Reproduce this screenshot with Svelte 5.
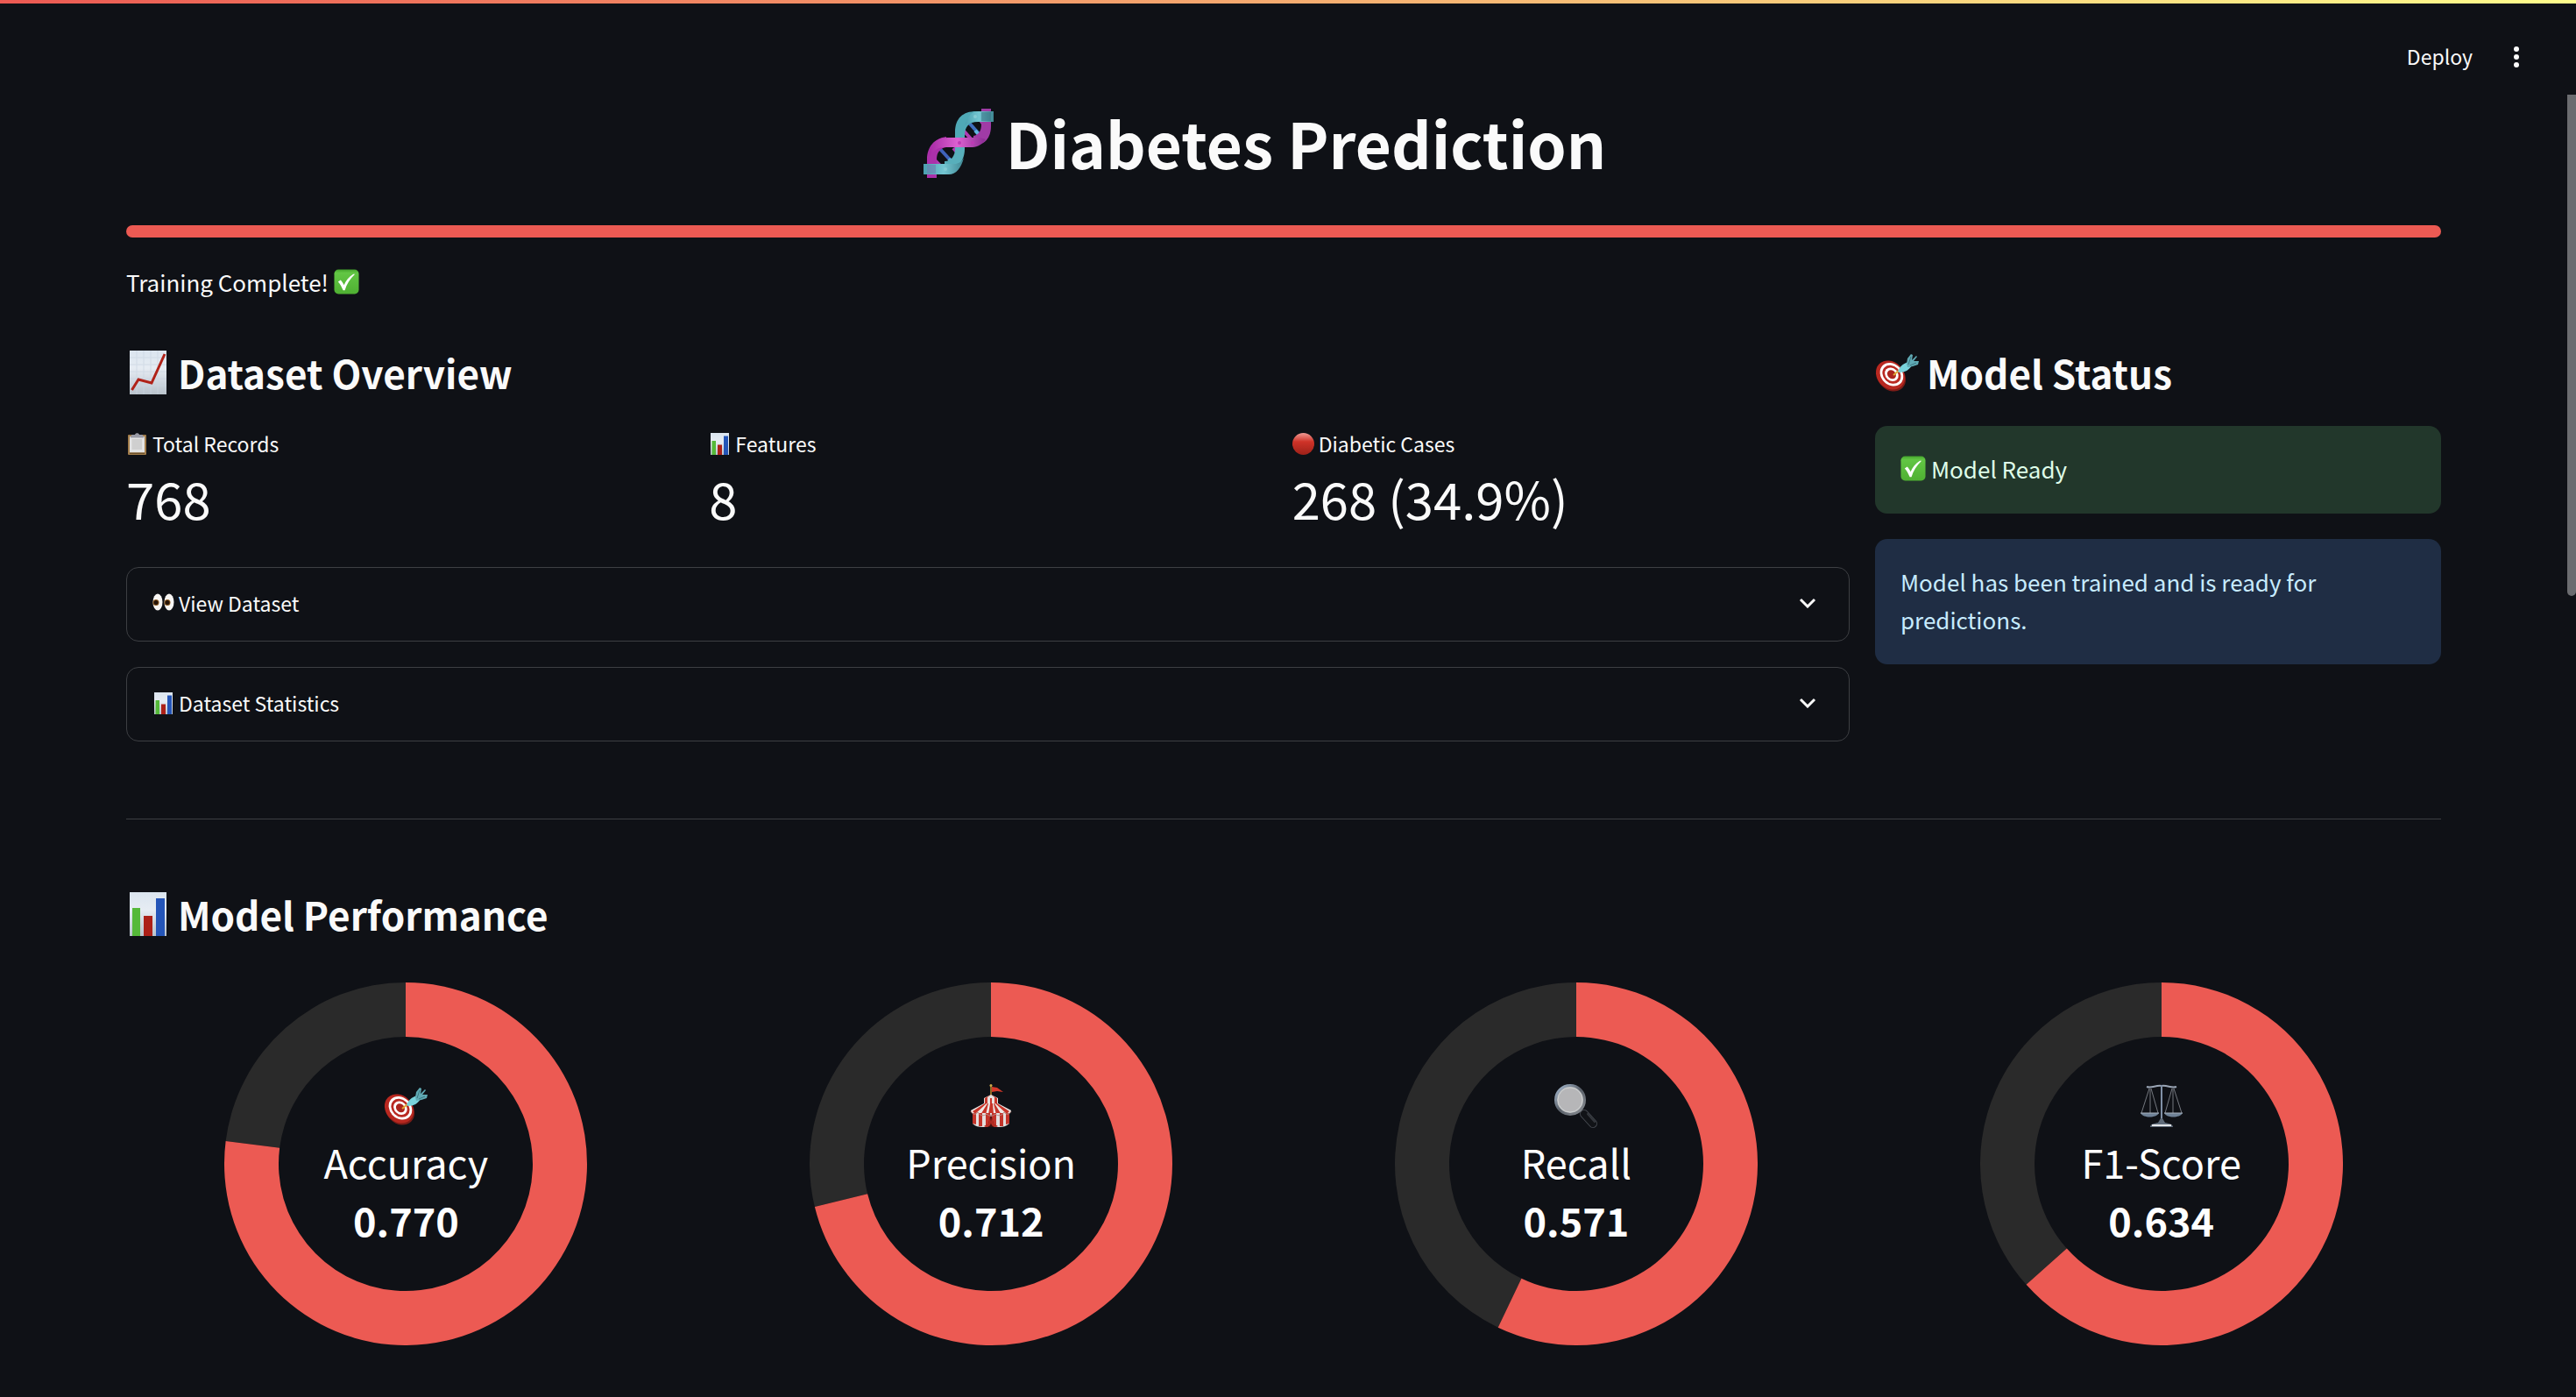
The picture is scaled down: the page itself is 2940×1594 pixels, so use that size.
<script>
  const metrics = [
    { icon: 'clipboard', label: 'Total Records', value: '768' },
    { icon: 'bars', label: 'Features', value: '8' },
    { icon: 'redDot', label: 'Diabetic Cases', value: '268 (34.9%)' }
  ];

  const panels = [
    { icon: 'eyes', label: 'View Dataset' },
    { icon: 'bars', label: 'Dataset Statistics' }
  ];

  const scores = [
    { icon: 'target', label: 'Accuracy', value: 0.77 },
    { icon: 'tent', label: 'Precision', value: 0.712 },
    { icon: 'magnifier', label: 'Recall', value: 0.571 },
    { icon: 'scales', label: 'F1-Score', value: 0.634 }
  ];

  // Annular sector between two fractions of a full turn, clockwise from 12 o'clock
  function sector(from, to) {
    const outer = 207;
    const inner = 145;
    const point = (radius, turn) => {
      const angle = turn * 2 * Math.PI;
      return `${(207 + radius * Math.sin(angle)).toFixed(2)} ${(207 - radius * Math.cos(angle)).toFixed(2)}`;
    };
    const large = to - from > 0.5 ? 1 : 0;
    return `M${point(outer, from)}A${outer} ${outer} 0 ${large} 1 ${point(outer, to)}L${point(inner, to)}A${inner} ${inner} 0 ${large} 0 ${point(inner, from)}Z`;
  }
</script>

<svg class="defs" aria-hidden="true">
  <defs>
    <linearGradient id="green" x1="0" y1="0" x2="0" y2="1">
      <stop offset="0" stop-color="#45a62c" /><stop offset="0.14" stop-color="#62c644" /><stop offset="1" stop-color="#4fb032" />
    </linearGradient>
    <linearGradient id="red" x1="0" y1="0" x2="0" y2="1">
      <stop offset="0" stop-color="#f09a94" /><stop offset="0.4" stop-color="#cf3328" /><stop offset="1" stop-color="#9d2119" />
    </linearGradient>
    <linearGradient id="paper" x1="0" y1="0" x2="0" y2="1">
      <stop offset="0" stop-color="#dbe5ef" /><stop offset="0.4" stop-color="#e6ecf3" /><stop offset="1" stop-color="#b9c3cc" />
    </linearGradient>
    <linearGradient id="pink" x1="0" y1="0" x2="1" y2="0">
      <stop offset="0" stop-color="#a82aa6" /><stop offset="0.5" stop-color="#dd62d2" /><stop offset="1" stop-color="#8a2b93" />
    </linearGradient>
    <linearGradient id="teal" x1="0" y1="0" x2="1" y2="0">
      <stop offset="0" stop-color="#4a9fae" /><stop offset="0.5" stop-color="#74c6d2" /><stop offset="1" stop-color="#3f8793" />
    </linearGradient>
    <linearGradient id="steel" x1="0" y1="0" x2="1" y2="1">
      <stop offset="0" stop-color="#a9bdd4" /><stop offset="0.5" stop-color="#596069" /><stop offset="1" stop-color="#8c9095" />
    </linearGradient>
  </defs>
</svg>

{#snippet icon(name)}
  {#if name === 'dna'}
    <svg class="icon" viewBox="0 0 80 80" aria-hidden="true">
      <path d="M51 17 67 35" stroke="#3f6fc0" stroke-width="4" />
      <path d="m59 27 8 9" stroke="#62b7e0" stroke-width="4" />
      <path d="m65 15 8 11M43 24l17 19" stroke="#b03bb4" stroke-width="4" />
      <path d="m18 47 21 23" stroke="#3f62bb" stroke-width="4" />
      <path d="m29 59 9 10" stroke="#57a9dc" stroke-width="4" />
      <path d="m10 58 12 12M34 47l9 10" stroke="#b03bb4" stroke-width="4" />
      <path d="M66 2h11v20c0 13-7 22-20 22V33c6-1 9-6 9-13z" fill="#a03ba6" />
      <path d="M36 44V29C36 13 45 5 60 5h5v12C53 16 47 21 47 33v11z" fill="#4fa9b6" />
      <path d="M47 21C51 9 56 5 62 5h18v12H60c-6 0-10 1-13 4z" fill="url(#teal)" />
      <path d="M36 43h11v5c0 13-8 24-20 24H24V62c8 0 12-7 12-14z" fill="#58afbb" />
      <path d="M4 81V60c0-15 9-24 22-26v12c-7 1-11 6-11 14v21z" fill="#ab30aa" />
      <path d="M7 47C12 38 18 35 28 35h37l6 2c-4 5-9 9-15 9H25c-8 0-14 3-18 11z" fill="url(#pink)" />
      <path d="M0 65h35c5 0 8-2 11-7-3 12-9 19-17 19H0z" fill="url(#teal)" />
      <path d="M4 66h10v10H4z" fill="#6c7fb2" opacity=".6" />
      <path d="M66 6h11v10H66z" fill="#336e80" opacity=".5" />
      <circle cx="41" cy="41" r="2" fill="#bd3ab5" /><circle cx="56" cy="41" r="2" fill="#bd3ab5" />
      <circle cx="25" cy="71" r="2" fill="#85cbd4" /><circle cx="59" cy="11" r="2" fill="#85cbd4" />
    </svg>
  {:else if name === 'check'}
    <svg class="icon" viewBox="0 0 30 30" aria-hidden="true">
      <rect x="0.5" y="0.5" width="29" height="29" rx="5" fill="url(#green)" />
      <path d="m5 15 3-2c2 2 3 4 4 6 2-5 6-10 11-13h2C19 12 15 18 13 25h-2C9 21 8 18 5 15z" fill="#fff" />
    </svg>
  {:else if name === 'chart'}
    <svg class="icon" viewBox="0 0 50 50" aria-hidden="true">
      <rect x="4" width="42" height="50" fill="url(#paper)" />
      <path d="M4 8h42M4 16h42M4 24h42M4 32h42M4 40h42M12 0v50M20 0v50M28 0v50M36 0v50" stroke="#cbd6e2" opacity=".7" />
      <path d="M6.5 45 14 33l15 4L44 4" fill="none" stroke="#b02218" stroke-width="3" />
    </svg>
  {:else if name === 'bars'}
    <svg class="icon" viewBox="0 0 50 50" aria-hidden="true">
      <rect x="4" width="42" height="50" fill="url(#paper)" />
      <path d="M7 18h9v32H7z" fill="#55b939" /><path d="M20 27h10v23H20z" fill="#ac2018" /><path d="M34 7h10v43H34z" fill="#2455b8" />
    </svg>
  {:else if name === 'clipboard'}
    <svg class="icon" viewBox="0 0 50 50" aria-hidden="true">
      <rect x="4" y="4" width="42" height="46" rx="2" fill="#a27d4b" />
      <path d="M8 8h34v37H8z" fill="#e4e4e4" /><path d="M13 14h23v24H13z" fill="#cfcfcf" />
      <path d="M8 45h34v3H8z" fill="#6d5029" />
      <path d="M13 4h7c1-5 9-5 10 0h7l4 7H9z" fill="#9a9ba6" />
    </svg>
  {:else if name === 'redDot'}
    <svg class="icon" viewBox="0 0 50 50" aria-hidden="true"><circle cx="25" cy="25" r="25" fill="url(#red)" /></svg>
  {:else if name === 'eyes'}
    <svg class="icon" viewBox="0 0 50 50" aria-hidden="true">
      <ellipse cx="12" cy="22" rx="11" ry="19" fill="#f8f6f4" /><ellipse cx="38" cy="22" rx="11" ry="19" fill="#f8f6f4" />
      <circle cx="8" cy="23" r="7" fill="#8b5a20" /><circle cx="34" cy="23" r="7" fill="#8b5a20" />
      <circle cx="8" cy="23" r="5" fill="#26150a" /><circle cx="34" cy="23" r="5" fill="#26150a" />
    </svg>
  {:else if name === 'target'}
    <svg class="icon" viewBox="0 -4 50 50" aria-hidden="true">
      <ellipse cx="18.5" cy="26" rx="15" ry="18" transform="rotate(-45 18.5 26)" fill="#7d1c17" />
      <g transform="rotate(-45 17.5 24)">
        <ellipse cx="17.5" cy="24" rx="15" ry="18" fill="#b82820" />
        <ellipse cx="19" cy="24.5" rx="12" ry="14.5" fill="#fff" />
        <ellipse cx="19" cy="24.5" rx="9.5" ry="11.5" fill="#ba2a22" />
        <ellipse cx="19" cy="24.5" rx="7" ry="8.5" fill="#fff" />
        <ellipse cx="19" cy="24.5" rx="4.500" ry="5.5" fill="#ab241d" />
      </g>
      <path d="m21 24 6-5" stroke="#dfa931" stroke-width="2" />
      <path d="M26 20c2-6 6-9 12-11l4 4c-3 5-8 8-14 8z" fill="#79d3dc" />
      <path d="m36 11 1-6 4-5 2 1-1 6 5-5 1 1-4 5 6 0-1 4-6 2-6 1z" fill="#60aab4" />
      <path d="m38 12 3-9M40 13l7-3" stroke="#3b7883" stroke-width="1" />
    </svg>
  {:else if name === 'tent'}
    <svg class="icon" viewBox="0 0 50 50" aria-hidden="true">
      <path d="M25 13V1" stroke="#b9892e" stroke-width="1.5" /><circle cx="25" cy="1.5" r="1.5" fill="#cda94a" />
      <path d="m26 3 6 1 7 5-7-1-6 1z" fill="#d7392a" />
      <path d="m25 12-8 4v6h16v-6z" fill="#e8e2e0" />
      <path d="m25 12-4 3v7h-3v-6zM25 12l4 3v7h3v-6zM24 16h2v6h-2z" fill="#c9372b" />
      <path d="M17 22h16l15 8-1 3H3l-1-3z" fill="#eee9e7" />
      <path d="m22 22-3 13h-6l8-13h-3L4 31l3 3 13-12zM28 22l3 13h6l-8-13h3l14 9-3 3-13-12zM24 22h3l1 13h-6z" fill="#c83529" />
      <path d="M4 33h42v12c-4 3-7 4-11 4H15c-4 0-8-1-11-4z" fill="#e3dedd" />
      <path d="M4 33h4v13l-4-1zM11 33h4v15h-4zM19 33h5v13l-5 3zM26 33h5v16l-5-3zM35 33h4v15h-4zM42 33h4v12l-4 1z" fill="#c3342a" />
      <path d="m25 34-4 15h8z" fill="#3b0d0b" />
      <path d="M2 31c2 4 6 4 8 1 2 4 7 5 10 2 3 3 7 3 10 0 3 3 8 2 10-2 2 3 6 3 8-1" fill="none" stroke="#b88a84" stroke-width="1" />
      <path d="m24 37-2 8-5 3c3 2 8 1 8-5M26 37l2 8 5 3c-3 2-8 1-8-5" fill="#b42c22" />
    </svg>
  {:else if name === 'magnifier'}
    <svg class="icon" viewBox="0 0 50 50" aria-hidden="true">
      <path d="m31 31 4 4" stroke="#a5a8ab" stroke-width="4" />
      <path d="m34 34 10 11" stroke="#464a51" stroke-width="10" stroke-linecap="round" />
      <path d="m34 34 10 11" stroke="#111317" stroke-width="8" stroke-linecap="round" />
      <path d="m38 34 8 9" stroke="#34373d" stroke-width="2" stroke-linecap="round" />
      <circle cx="18" cy="18" r="16.5" fill="#b6b6b8" stroke="url(#steel)" stroke-width="3" />
      <circle cx="18" cy="18" r="14" fill="none" stroke="#d0d4d4" stroke-width="1" />
    </svg>
  {:else if name === 'scales'}
    <svg class="icon" viewBox="0 0 50 50" fill="none" aria-hidden="true">
      <path d="M8 3c6 2 10-2 17-1 7-1 11 3 17 1" stroke="#9aa5b5" stroke-width="2" />
      <path d="m11 5-9 28M12 5v28M13 5l8 28M37 5l-8 28M38 5v28M39 5l9 28" stroke="#74787f" stroke-width="1" />
      <path d="M25 1v42" stroke="#8090a6" stroke-width="2" />
      <path d="M1 33h21c-3 6-18 6-21 0zM28 33h21c-3 6-18 6-21 0z" fill="#6f8297" />
      <path d="M1 33h21M28 33h21" stroke="#a9b3bf" stroke-width="1" />
      <path d="m24 39-3 5c-4 1-9 1-9 5h26c0-4-5-4-9-5l-3-5z" fill="#5f6b79" />
      <path d="M14 47h22" stroke="#e2e5e8" stroke-width="2" />
    </svg>
  {/if}
{/snippet}

<div class="app">
  <div class="strip"></div>
  <header>
    <button class="deploy" type="button">Deploy</button>
    <button class="menu" type="button" aria-label="Main menu">
      <svg viewBox="0 0 24 24" aria-hidden="true"><circle cx="12" cy="3" r="3" /><circle cx="12" cy="12" r="3" /><circle cx="12" cy="21" r="3" /></svg>
    </button>
  </header>

  <main>
    <h1>{@render icon('dna')}<span>Diabetes Prediction</span></h1>
    <div class="progress" role="progressbar" aria-label="Training" aria-valuenow="100" aria-valuemin="0" aria-valuemax="100"></div>
    <p class="done">Training Complete! {@render icon('check')}</p>

    <div class="columns">
      <section class="overview">
        <h2>{@render icon('chart')}<span>Dataset Overview</span></h2>
        <div class="metrics">
          {#each metrics as metric}
            <div class="metric">
              <p class="label">{@render icon(metric.icon)}<span>{metric.label}</span></p>
              <p class="value">{metric.value}</p>
            </div>
          {/each}
        </div>
        <div class="panels">
          {#each panels as panel}
            <button class="panel" type="button" aria-expanded="false">
              {@render icon(panel.icon)}<span>{panel.label}</span>
              <svg class="chevron" viewBox="0 0 20 12" aria-hidden="true"><path d="m2 2 8 8 8-8" /></svg>
            </button>
          {/each}
        </div>
      </section>

      <section class="status">
        <h2>{@render icon('target')}<span>Model Status</span></h2>
        <div class="alerts">
          <div class="alert success" role="status">{@render icon('check')}<span>Model Ready</span></div>
          <div class="alert info" role="status">Model has been trained and is ready for predictions.</div>
        </div>
      </section>
    </div>

    <hr />

    <h2>{@render icon('bars')}<span>Model Performance</span></h2>
    <div class="scores">
      {#each scores as score}
        <figure>
          <svg class="ring" viewBox="0 0 414 414" aria-hidden="true">
            <path class="rest" d={sector(score.value, 1)} />
            <path class="filled" d={sector(0, score.value)} />
          </svg>
          <figcaption>
            {@render icon(score.icon)}
            <span>{score.label}</span>
            <strong>{score.value.toFixed(3)}</strong>
          </figcaption>
        </figure>
      {/each}
    </div>
  </main>
  <div class="scrollbar"></div>
</div>

<style>
  :global(body) {
    background: #0f1116;
  }

  .app {
    position: relative;
    height: 100vh;
    overflow: hidden;
    background: #0f1116;
    color: #fafafa;
    font-family: 'Noto Sans CJK SC', 'Noto Sans', sans-serif;
    font-size: 26px;
    line-height: 43px;
  }

  .defs {
    position: absolute;
    width: 0;
    height: 0;
  }

  .icon {
    display: block;
    flex: none;
    overflow: visible;
  }

  .strip {
    height: 4px;
    background: linear-gradient(90deg, #ec5a53, #fffd8c);
  }

  header {
    display: flex;
    justify-content: flex-end;
    align-items: flex-start;
    gap: 38px;
    box-sizing: border-box;
    height: 115px;
    padding: 42px 56px 0 0;
  }

  button {
    border: 0;
    padding: 0;
    background: none;
    color: inherit;
    font: inherit;
    cursor: pointer;
  }

  .deploy {
    font-size: 23px;
    line-height: 36px;
  }

  .menu {
    padding: 7px 0;
  }

  .menu svg {
    display: block;
    width: 24px;
    height: 24px;
    fill: #fafafa;
  }

  main {
    padding: 0 154px 0 144px;
  }

  h1,
  h2,
  p,
  figure {
    margin: 0;
  }

  h1 {
    display: flex;
    justify-content: center;
    align-items: center;
    gap: 14px;
    padding-right: 43px;
    font-size: 71px;
    line-height: 86px;
  }

  h1 :global(.icon) {
    width: 80px;
    height: 80px;
  }

  .progress {
    height: 14px;
    margin-top: 52px;
    border-radius: 7px;
    background: #ec5a53;
  }

  .done {
    display: flex;
    align-items: center;
    gap: 6px;
    margin-top: 29px;
  }

  .done :global(.icon),
  .alert :global(.icon) {
    width: 29px;
    height: 29px;
  }

  .columns {
    display: flex;
    gap: 29px;
    margin-top: 52px;
  }

  .overview {
    flex: 1 1 calc(75% - 29px);
  }

  .status {
    flex: 1 1 calc(25% - 29px);
  }

  h2 {
    display: flex;
    align-items: center;
    gap: 9px;
    font-size: 44px;
    line-height: 60px;
  }

  h2 :global(.icon) {
    width: 50px;
    height: 50px;
  }

  .metrics {
    display: grid;
    grid-template-columns: repeat(3, 1fr);
    gap: 29px;
    margin-top: 31px;
  }

  .label {
    display: flex;
    align-items: center;
    gap: 5px;
    font-size: 23px;
    line-height: 40px;
  }

  .label :global(.icon),
  .panel :global(.icon) {
    width: 25px;
    height: 25px;
  }

  .value {
    font-size: 58px;
    line-height: 84px;
  }

  .panels {
    display: flex;
    flex-direction: column;
    gap: 29px;
    margin-top: 37px;
  }

  .panel {
    display: flex;
    align-items: center;
    gap: 5px;
    box-sizing: border-box;
    height: 85px;
    padding: 0 37px 3px 29px;
    border: 1px solid #3d3f43;
    border-radius: 14px;
    font-size: 23px;
    line-height: 36px;
  }

  .chevron {
    width: 20px;
    height: 12px;
    margin-left: auto;
    fill: none;
    stroke: #fafafa;
    stroke-width: 3px;
  }

  .alerts {
    display: flex;
    flex-direction: column;
    gap: 29px;
    margin-top: 31px;
  }

  .alert {
    display: flex;
    align-items: center;
    gap: 6px;
    padding: 27px 29px 30px;
    border-radius: 14px;
  }

  .success {
    background: #22372b;
    color: #dffde9;
  }

  .info {
    background: #1f2d44;
    color: #c7ebff;
  }

  hr {
    height: 1px;
    margin: 88px 0 78px;
    border: 0;
    background: #3d3f43;
  }

  .scores {
    display: grid;
    grid-template-columns: repeat(4, 1fr);
    gap: 29px;
    margin-top: 48px;
  }

  figure {
    display: grid;
    place-items: center;
  }

  .ring,
  figcaption {
    grid-area: 1 / 1;
  }

  .ring {
    width: 414px;
    height: 414px;
  }

  .filled {
    fill: #ec5a53;
  }

  .rest {
    fill: #2a2a2a;
  }

  figcaption {
    display: flex;
    flex-direction: column;
    align-items: center;
    padding-top: 6px;
    color: #fff;
    font-size: 45px;
    line-height: 66px;
  }

  figcaption :global(.icon) {
    width: 50px;
    height: 50px;
    margin-bottom: 6px;
  }

  .scrollbar {
    position: absolute;
    top: 108px;
    right: 0;
    width: 10px;
    height: 572px;
    border-radius: 0 0 5px 5px;
    background: #6b6c70;
  }
</style>
